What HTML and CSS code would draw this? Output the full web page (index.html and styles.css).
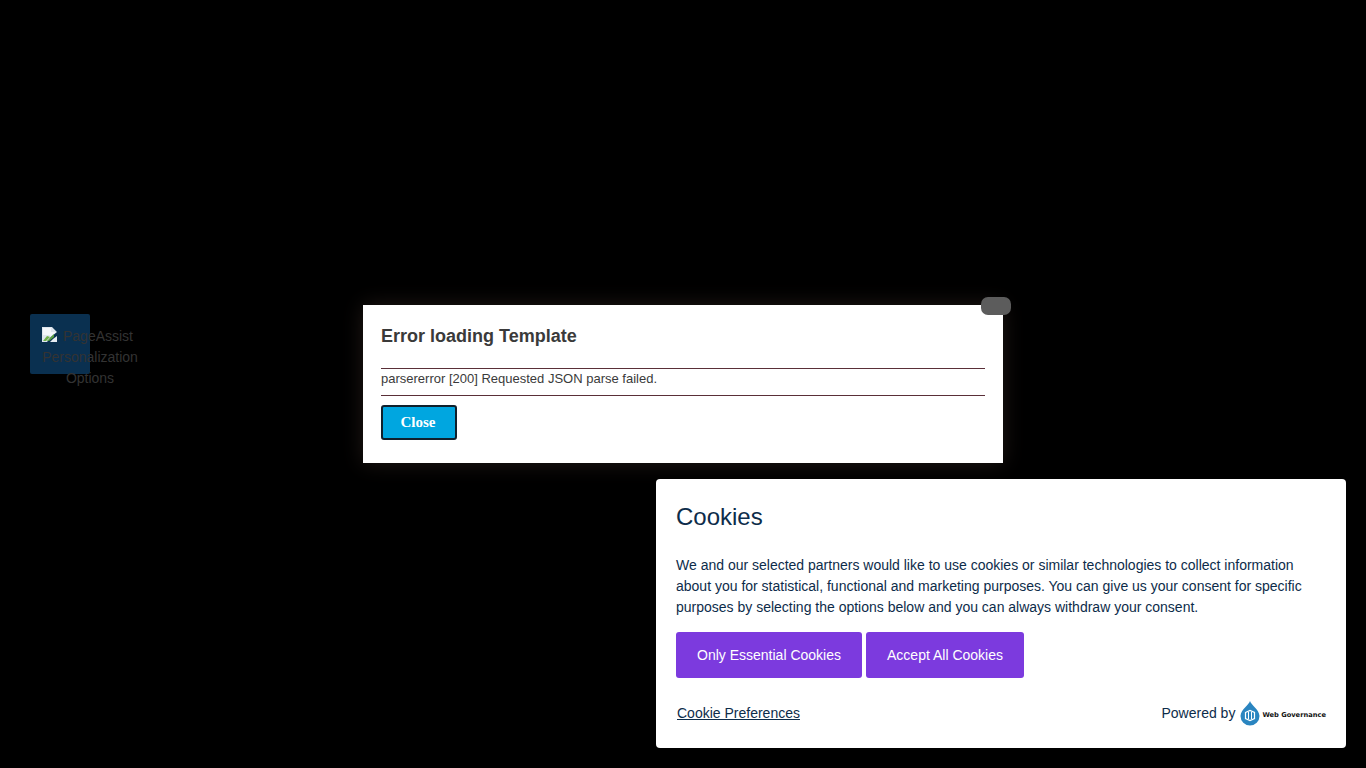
FILE: index.html
```html
<!DOCTYPE html>
<html lang="en">
<head>
<meta charset="utf-8">
<title>Error loading Template</title>
<link rel="stylesheet" href="styles.css">
</head>
<body>
<div class="tile">
  <div class="alt">
    <svg class="broken" width="16" height="16" viewBox="0 0 16 16"><path d="M0 0h10l5 5-6 5-4 5H0z" fill="#dfe6ee"/><path d="M1 1h8v4h5l-5 4-2-1H1z" fill="#f4f7fb"/><path d="M1 14l4-5 3 1-4 4z" fill="#6fb04a"/><path d="M5 14l4-4 3-3v3l-5 4z" fill="#58a03c"/><path d="M11 12l4-3v6h-7z" fill="#e8edf3"/></svg><span class="alt-first">PageAssist</span> Personalization Options
  </div>
</div>

<div class="modal">
  <button class="modal-x" type="button" aria-label="Close"></button>
  <h2 class="modal-title">Error loading Template</h2>
  <p class="modal-body">parsererror [200] Requested JSON parse failed.</p>
  <button class="modal-close" type="button">Close</button>
</div>

<section class="cookies">
  <h2 class="cookies-title">Cookies</h2>
  <p class="cookies-text">We and our selected partners would like to use cookies or similar technologies to collect information about you for statistical, functional and marketing purposes. You can give us your consent for specific purposes by selecting the options below and you can always withdraw your consent.</p>
  <div class="cookies-actions">
    <button class="cookie-btn cookie-btn-a" type="button">Only Essential Cookies</button>
    <button class="cookie-btn cookie-btn-b" type="button">Accept All Cookies</button>
  </div>
  <div class="cookies-foot">
    <a class="cookie-link" href="#">Cookie Preferences</a>
    <div class="powered">
      <span>Powered by</span>
      <svg class="drop" width="20" height="25" viewBox="0 0 20 25"><path d="M10 0c1 4 9 8 9.500 15a9.500 9.500 0 0 1-19 0C1 8 9 4 10 0z" fill="#2a85c0"/><path d="M5.500 11.500l4.500-2 4.500 2v6l-4.500 2-4.500-2z" fill="none" stroke="#fff" stroke-width="1.200"/><path d="M8.500 11v7M11.500 11v7" stroke="#fff" stroke-width="1"/></svg>
      <span class="wg">Web Governance</span>
    </div>
  </div>
</section>
</body>
</html>
```

FILE: styles.css
```css
html, body {
  margin: 0;
  height: 100%;
  background: #000;
  overflow: hidden;
  font-family: "Liberation Sans", Arial, sans-serif;
}

.tile {
  position: absolute;
  left: 30px;
  top: 314px;
  width: 60px;
  height: 60px;
  background: #0a3050;
  border-radius: 2px;
}

.alt {
  position: absolute;
  left: 10px;
  top: 12px;
  width: 100px;
  font-size: 14px;
  line-height: 21px;
  color: #333;
  text-align: center;
}

.broken {
  vertical-align: -2px;
}

.alt-first {
  margin-left: 5px;
  margin-right: 5px;
}

.modal {
  position: absolute;
  left: 363px;
  top: 305px;
  width: 604px;
  height: 122px;
  padding: 18px;
  background: #fff;
  box-shadow: 0 0 20px rgba(255, 190, 170, 0.13);
  color: #3a3a3a;
}

.modal-x {
  position: absolute;
  left: 618px;
  top: -8px;
  width: 30px;
  height: 18px;
  padding: 0;
  border: 0;
  border-radius: 7px;
  background: #5c5c5c;
}

.modal-title {
  margin: 0;
  font-size: 18px;
  line-height: 26px;
  height: 45px;
  font-weight: bold;
}

.modal-body {
  margin: 0;
  height: 26px;
  border-top: 1px solid #5a2f38;
  border-bottom: 1px solid #5a2f38;
  font-size: 13px;
  line-height: 20px;
}

.modal-close {
  display: block;
  margin-top: 9px;
  width: 76px;
  height: 35px;
  padding: 0 2px 0 0;
  border: 2px solid #10202c;
  border-radius: 3px;
  background: #00a6e0;
  color: #fff;
  font-family: "Liberation Serif", "Times New Roman", serif;
  font-size: 15px;
  font-weight: bold;
}

.cookies {
  position: absolute;
  left: 656px;
  top: 479px;
  box-sizing: border-box;
  width: 690px;
  height: 269px;
  padding: 20px;
  background: #fff;
  border-radius: 4px;
  color: #0d2c4a;
  display: flex;
  flex-direction: column;
}

.cookies-title {
  margin: 0;
  font-size: 24px;
  font-weight: normal;
  line-height: 36px;
}

.cookies-text {
  margin: 20px 0 0;
  font-size: 14px;
  line-height: 21px;
}

.cookies-actions {
  display: flex;
  gap: 4px;
  margin-top: 14px;
}

.cookie-btn {
  height: 46px;
  padding: 0;
  border: 0;
  border-radius: 3px;
  background: #7c3ade;
  color: #fff;
  font-family: inherit;
  font-size: 14px;
}

.cookie-btn-a {
  width: 186px;
}

.cookie-btn-b {
  width: 158px;
}

.cookies-foot {
  display: flex;
  justify-content: space-between;
  align-items: center;
  margin-top: 21px;
  font-size: 14px;
}

.cookie-link {
  margin-left: 1px;
  color: #0d2c4a;
}

.powered {
  display: flex;
  align-items: center;
  gap: 5px;
}

.drop {
  margin-top: 2px;
}

.wg {
  margin: 5px 0 0 -3px;
  color: #111;
  font-family: "DejaVu Sans", sans-serif;
  font-size: 6.7px;
  font-weight: bold;
}
```
